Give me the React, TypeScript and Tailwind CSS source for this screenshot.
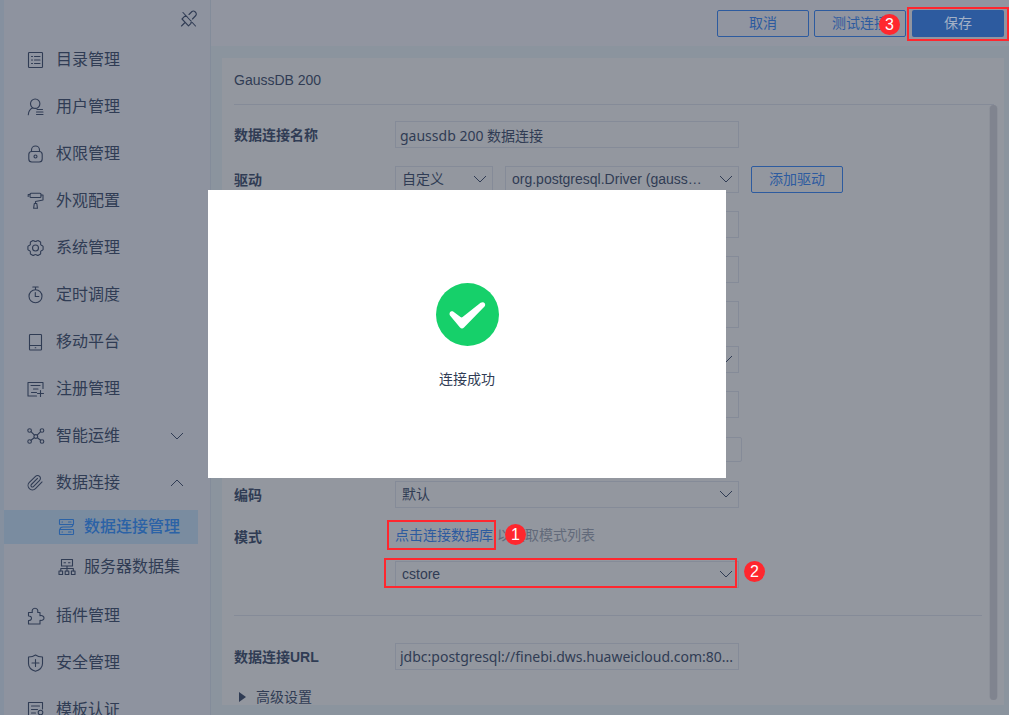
import type { ReactNode } from 'react';

const cjk = "font-['Liberation_Sans','Noto_Sans_CJK_SC',sans-serif]";
const uiFont = "font-['Noto_Sans','Noto_Sans_CJK_SC',sans-serif]";

function Icon({ children }: { children: ReactNode }) {
  return (
    <svg
      viewBox="0 0 18 18"
      className="w-[18px] h-[18px] shrink-0"
      fill="none"
      stroke="currentColor"
      strokeWidth="1.1"
      strokeLinecap="round"
      strokeLinejoin="round"
      aria-hidden="true"
    >
      {children}
    </svg>
  );
}

const icons = {
  catalog: (
    <Icon>
      <rect x="1.5" y="1.5" width="14" height="15" rx="0.8" />
      <path d="M4.5 5.5h1M4.5 9h1M4.5 12.5h1M7.5 5.5h5.5M7.5 9h5.5M7.5 12.5h5.5" />
    </Icon>
  ),
  user: (
    <Icon>
      <circle cx="8.2" cy="5.7" r="4.7" />
      <path d="M5.8 9.8C3.2 11 1.5 13.5 1.3 16.8M10 11.5h5.5M9.5 14h6.5M9.5 16.5h6.5" />
    </Icon>
  ),
  lock: (
    <Icon>
      <rect x="1.8" y="6.5" width="13.4" height="10.5" rx="3" />
      <path d="M4.5 6.5V5a4 4 0 0 1 8 0v1.5" />
      <circle cx="8.5" cy="11.5" r="1.5" />
    </Icon>
  ),
  roller: (
    <Icon>
      <rect x="3" y="1.2" width="11" height="4.3" rx="1" />
      <path d="M3 2.5H1.2v2M14 3h2v5L8.5 9.500v2M7.300 11.500h2.500l.7 4.800H6.600z" />
    </Icon>
  ),
  gear: (
    <Icon>
      <path d="M6 1.5c1 0 1.500 1 2.500 1s1.500-1 2.500-1l2.500 1.500c.5 1-.2 2 .3 2.800.5.8 1.700.7 2.300 1.700v3c-.6 1-1.800.9-2.300 1.700-.5.8.2 1.800-.3 2.800L11 16.500c-1 0-1.500-1-2.500-1s-1.500 1-2.500 1L3.500 15c-.5-1 .2-2-.3-2.800-.5-.8-1.700-.7-2.300-1.700v-3c.6-1 1.800-.9 2.300-1.700.5-.8-.2-1.800.3-2.800z" />
      <circle cx="8.5" cy="9" r="3" />
    </Icon>
  ),
  timer: (
    <Icon>
      <circle cx="8.5" cy="10.2" r="6.5" />
      <path d="M5.8 1h5.4M8.5 1v2.5M8.3 6.5v4h3.5" />
    </Icon>
  ),
  tablet: (
    <Icon>
      <rect x="2.5" y="1.5" width="12" height="15.5" rx="0.8" />
      <path d="M2.5 12.5h12M8.2 14.8h.6" />
    </Icon>
  ),
  register: (
    <Icon>
      <path d="M16 8.5v-6H1V16h8.5M4 5.5h9M6.5 9H11M4.5 12.5h5M13.5 10.5v6M10.5 13.5h6" />
    </Icon>
  ),
  network: (
    <Icon>
      <circle cx="2.6" cy="3.5" r="1.8" />
      <circle cx="15" cy="3.5" r="1.8" />
      <circle cx="2.6" cy="14.5" r="1.8" />
      <circle cx="15" cy="14.5" r="1.8" />
      <circle cx="8.8" cy="9.5" r="1.9" />
      <path d="M4 4.700l3.200 3.200M13.600 4.700l-3.200 3.200M4 13.300l3.200-2.500M13.600 13.300l-3.200-2.500" />
    </Icon>
  ),
  clip: (
    <Icon>
      <g transform="scale(0.72) translate(-0.5 0)" strokeWidth="1.5">
        <path d="m21.440 11.050-9.190 9.190a6 6 0 0 1-8.490-8.490l8.570-8.570A4 4 0 1 1 18 8.840l-8.590 8.570a2 2 0 0 1-2.830-2.830l8.490-8.480" />
      </g>
    </Icon>
  ),
  servers: (
    <Icon>
      <rect x="1.5" y="1.500" width="14" height="5" rx="0.6" />
      <rect x="1.5" y="11.500" width="14" height="5" rx="0.6" />
      <path d="M15 6.500c0 2-1 2.500-3 2.500H5c-2 0-3 .5-3 2.500M4 4h.5M10.500 4h2.500M4 14h.5M10.500 14h2.500" />
    </Icon>
  ),
  dataset: (
    <Icon>
      <path d="M3.500 1.500h11v6.500h-11zM6 4.700h1.500M10.500 4.700H12M9 8v5M2.800 13v-2.500h12.500V13" />
      <rect x="1" y="13" width="3.6" height="3.5" />
      <rect x="7.2" y="13" width="3.6" height="3.5" />
      <rect x="13.4" y="13" width="3.6" height="3.5" />
    </Icon>
  ),
  puzzle: (
    <Icon>
      <path d="M1.500 5.500h3.800c-.5-2 .3-4.300 2.700-4.300s3.200 2.300 2.700 4.300H13v3.200c2-.6 4 .4 4 2.300s-2 2.900-4 2.300V17H1.500v-3.500c1.700.2 3-.8 3-2.300S3.200 8.800 1.500 9z" />
    </Icon>
  ),
  shield: (
    <Icon>
      <path d="M8.500 1c2 1.500 4.500 2 7 2v6.500c0 4-3 6.500-7 7.800-4-1.300-7-3.800-7-7.800V3c2.500 0 5-.5 7-2zM8.500 5.500v7M5 9h7" />
    </Icon>
  ),
  template: (
    <Icon>
      <path d="M15.500 8V1.500h-14V17H10M4.500 5h8M4.500 8.500h6M4.500 12h4" />
      <circle cx="13.500" cy="11.500" r="2.300" />
      <path d="M12.500 13.500V17l1-1 1 1v-3.500" />
    </Icon>
  ),
};

function Chevron({ up = false, className = '' }: { up?: boolean; className?: string }) {
  return (
    <svg
      viewBox="0 0 14 8"
      className={`w-[14px] h-2 ${className}`}
      fill="none"
      stroke="currentColor"
      aria-hidden="true"
    >
      <path d={up ? 'M1 7l6-6 6 6' : 'M1 1l6 6 6-6'} />
    </svg>
  );
}

interface MenuItem {
  label: string;
  icon: ReactNode;
  state?: 'open' | 'closed';
}

const topItems: MenuItem[] = [
  { label: '目录管理', icon: icons.catalog },
  { label: '用户管理', icon: icons.user },
  { label: '权限管理', icon: icons.lock },
  { label: '外观配置', icon: icons.roller },
  { label: '系统管理', icon: icons.gear },
  { label: '定时调度', icon: icons.timer },
  { label: '移动平台', icon: icons.tablet },
  { label: '注册管理', icon: icons.register },
  { label: '智能运维', icon: icons.network, state: 'closed' },
  { label: '数据连接', icon: icons.clip, state: 'open' },
];

const bottomItems: MenuItem[] = [
  { label: '插件管理', icon: icons.puzzle },
  { label: '安全管理', icon: icons.shield },
  { label: '模板认证', icon: icons.template },
];

function NavItem({ item }: { item: MenuItem }) {
  return (
    <button type="button" className="flex items-center w-full h-[47px] shrink-0 gap-[11px] pl-[23px] pr-[26px] text-left">
      {item.icon}
      <span className="flex-1">{item.label}</span>
      {item.state && <Chevron up={item.state === 'open'} />}
    </button>
  );
}

function Sidebar() {
  return (
    <aside className="flex flex-col w-[211px] shrink-0 overflow-hidden border-l-4 border-l-[#85909f] border-r border-r-[#838c9a] bg-[#8e939f] text-base">
      <div className="flex h-9 shrink-0 items-center justify-end pr-3 pt-[2px]">
        <button type="button" aria-label="取消固定">
          <Icon>
            <path d="M3 2.500 15.500 16M9 4.500l3-3c2-1.500 5.500 1.500 3.800 4L12.500 9M7 6.500 4.800 6.200 2 9l6.500 6.800 2.500-2.500v-2.500M5 12.500 1.500 16" />
          </Icon>
        </button>
      </div>
      <nav className="flex flex-col">
        {topItems.map((item) => (
          <NavItem key={item.label} item={item} />
        ))}
        <div className="flex flex-col gap-[6px] pt-1 pb-2 pr-3">
          <a href="#connections" className="flex items-center h-[34px] gap-2 pl-[54px] bg-[#7a8ca0] text-[#2b62a6] font-medium">
            {icons.servers}
            数据连接管理
          </a>
          <a href="#datasets" className="flex items-center h-[34px] gap-2 pl-[54px]">
            {icons.dataset}
            服务器数据集
          </a>
        </div>
        {bottomItems.map((item) => (
          <NavItem key={item.label} item={item} />
        ))}
      </nav>
    </aside>
  );
}

function Badge({ n, className }: { n: number; className: string }) {
  return (
    <span
      className={`absolute flex items-center justify-center w-[21px] h-[21px] rounded-full bg-[#ff272e] text-white text-base leading-none ${className}`}
    >
      {n}
    </span>
  );
}

function OutlineButton({ children }: { children: ReactNode }) {
  return (
    <button
      type="button"
      className="flex items-center justify-center w-[92px] h-[27px] pb-px rounded-xs border border-[#2d5b9f] text-[#2d5b9f]"
    >
      {children}
    </button>
  );
}

function Row({ label, htmlFor, children }: { label: string; htmlFor: string; children: ReactNode }) {
  return (
    <div className="flex h-[27px] items-center">
      <label htmlFor={htmlFor} className="w-[161px] shrink-0 font-bold">
        {label}
      </label>
      {children}
    </div>
  );
}

function TextField({ id, value = '', className = 'w-[344px] h-[27px]' }: { id: string; value?: string; className?: string }) {
  return (
    <input
      id={id}
      type="text"
      defaultValue={value}
      className={`border border-[#858b98] px-1 ${uiFont} ${className}`}
    />
  );
}

function SelectField({ id, value, label, className = 'w-[344px]' }: { id: string; value: string; label?: string; className?: string }) {
  return (
    <div className={`relative ${className}`}>
      <select
        id={id}
        aria-label={label}
        className="appearance-none block w-full h-[27px] border border-[#858b98] pl-[6px] pr-7 pb-px text-ellipsis"
      >
        <option>{value}</option>
      </select>
      <Chevron className="absolute right-[6px] top-[9px] pointer-events-none" />
    </div>
  );
}

function ConnectionForm() {
  return (
    <form className="flex flex-1 min-h-0 overflow-hidden">
      <div className="flex-1 pt-4">
        <div className="flex flex-col gap-[18px]">
          <Row label="数据连接名称" htmlFor="name">
            <TextField id="name" value="gaussdb 200 数据连接" />
          </Row>
          <Row label="驱动" htmlFor="driver">
            <div className="flex items-center gap-3">
              <SelectField id="driver" value="自定义" className="w-[98px]" />
              <SelectField id="driver-class" label="驱动类" value="org.postgresql.Driver (gauss…" className="w-[234px]" />
              <OutlineButton>添加驱动</OutlineButton>
            </div>
          </Row>
          <Row label="数据库名称" htmlFor="database">
            <TextField id="database" />
          </Row>
          <Row label="主机" htmlFor="host">
            <TextField id="host" />
          </Row>
          <Row label="端口" htmlFor="port">
            <TextField id="port" />
          </Row>
          <Row label="认证方式" htmlFor="auth">
            <SelectField id="auth" value="用户名密码" />
          </Row>
          <Row label="用户名" htmlFor="username">
            <TextField id="username" />
          </Row>
          <Row label="密码" htmlFor="password">
            <TextField id="password" className="w-[347px] h-[25px] rounded-xs" />
          </Row>
          <Row label="编码" htmlFor="encoding">
            <SelectField id="encoding" value="默认" />
          </Row>
        </div>

        <div className="flex pt-3">
          <label htmlFor="schema" className="w-[161px] shrink-0 pt-[7px] font-bold">
            模式
          </label>
          <div>
            <div className="relative flex items-center h-[30px] gap-1">
              <div className="relative">
                <a href="#connect" className="text-[#2d5b9f]">
                  点击连接数据库
                </a>
                <span className="absolute -left-2 -right-[3px] -inset-y-[5px] border-2 border-[#ff272e] pointer-events-none" />
              </div>
              <span className="text-[#626a7a]">以获取模式列表</span>
              <Badge n={1} className="left-[110px] top-1" />
            </div>
            <div className="relative mt-[11px]">
              <SelectField id="schema" value="cstore" />
              <span className="absolute -left-[11px] right-[2px] -top-[3px] bottom-0 border-2 border-[#ff272e] pointer-events-none" />
              <Badge n={2} className="-right-[26px] top-0" />
            </div>
          </div>
        </div>

        <hr className="mt-[27px] mr-[7px] border-[#858b98]" />

        <div className="pt-[27px]">
          <Row label="数据连接URL" htmlFor="url">
            <TextField id="url" value="jdbc:postgresql://finebi.dws.huaweicloud.com:80..." />
          </Row>
        </div>
        <button type="button" className="flex items-center gap-[10px] mt-[17px] pl-[5px]">
          <span className="w-0 h-0 border-y-[5px] border-y-transparent border-l-[7px] border-l-[#2f3b53]" />
          高级设置
        </button>
      </div>

      {/* Scrollbar */}
      <div className="w-[9px] mr-[6px] mb-[5px] px-px rounded-full bg-[#8d919a]">
        <div className="h-full rounded-full bg-[#80848f]" />
      </div>
    </form>
  );
}

function SuccessDialog() {
  return (
    <div
      role="dialog"
      aria-label="连接成功"
      className="absolute left-[208px] top-[190px] w-[518px] h-[288px] flex flex-col items-center bg-white pt-[93px]"
    >
      <svg viewBox="0 0 63 63" className="w-[63px] h-[63px]" aria-hidden="true">
        <circle cx="31.5" cy="31.5" r="31.5" fill="#16d06a" />
        <path
          d="M14 32.500c-1.500-2.500 1-5.200 3.500-3.700l7 5.200c.7.500 1.400.5 2.100 0l18-14.200c3-2 6 1 3.900 3.800L28 44.500c-1.200 1.400-2.800 1.400-4 0z"
          fill="#fff"
        />
      </svg>
      <p className="mt-[23px]">连接成功</p>
    </div>
  );
}

export default function App() {
  return (
    <div className={`relative flex h-screen overflow-hidden bg-[#8b949e] text-sm text-[#303c54] ${cjk}`}>
      <Sidebar />
      <main className="flex flex-col flex-1 min-w-0">
        <header className="flex shrink-0 h-[46px] justify-end gap-[5px] pt-[10px] pr-[5px] bg-[#9195a0]">
          <OutlineButton>取消</OutlineButton>
          <div className="relative h-[27px]">
            <OutlineButton>测试连接</OutlineButton>
            <Badge n={3} className="right-[6px] top-1" />
          </div>
          <div className="relative h-[27px] ml-px">
            <button type="button" className="w-[92px] h-[27px] pb-px rounded-xs bg-[#2d5b9f] text-[#a3b1c6]">
              保存
            </button>
            <span className="absolute -left-[5px] -right-[5px] -top-[3px] -bottom-1 border-2 border-[#ff272e] pointer-events-none" />
          </div>
        </header>
        <section className="flex flex-col flex-1 min-h-0 mt-3 mb-[10px] ml-[11px] mr-[5px] pl-3 bg-[#93979f]">
          <h1 className="flex shrink-0 items-center h-[47px] pb-[2px] mr-[10px] border-b border-[#858b98]">GaussDB 200</h1>
          <ConnectionForm />
        </section>
      </main>
      <SuccessDialog />
    </div>
  );
}
